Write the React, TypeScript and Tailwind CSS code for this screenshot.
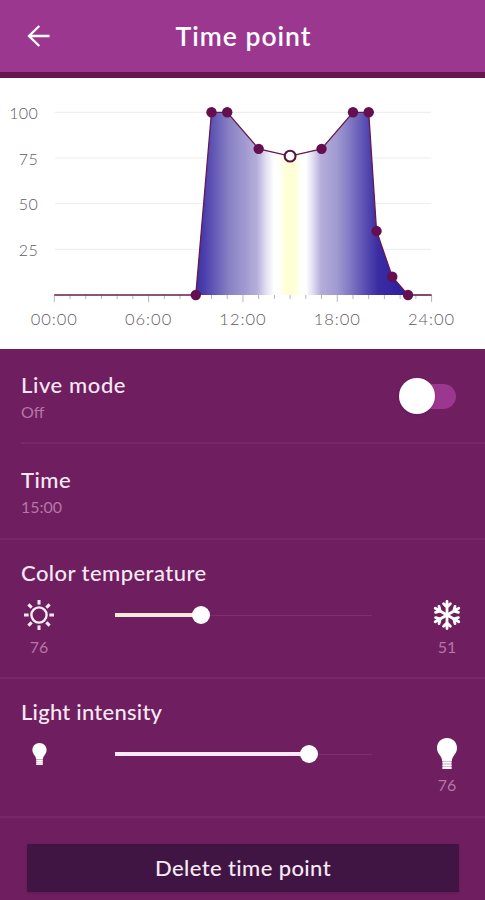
import React, { useState } from 'react';

interface TimePoint {
  hour: number;
  value: number;
}

const POINTS: TimePoint[] = [
  { hour: 9, value: 0 },
  { hour: 10, value: 100 },
  { hour: 11, value: 100 },
  { hour: 13, value: 80 },
  { hour: 15, value: 76 },
  { hour: 17, value: 80 },
  { hour: 19, value: 100 },
  { hour: 20, value: 100 },
  { hour: 20.5, value: 35 },
  { hour: 21.5, value: 10 },
  { hour: 22.5, value: 0 },
];

const SELECTED_HOUR = 15;

// chart coordinates
const toX = (hour: number) => 54.3 + hour * 15.72;
const toY = (value: number) => 217 - value * 1.827;

const STOPS: [number, string][] = [
  [196, '#3f309f'],
  [204, '#4a3fac'],
  [216, '#675eb8'],
  [230, '#8a83c4'],
  [244, '#9f98d0'],
  [257, '#b5aedb'],
  [266, '#e3dff1'],
  [274, '#ffffff'],
  [278, '#ffffff'],
  [286, '#ffffd6'],
  [295, '#ffffd6'],
  [302, '#ffffff'],
  [306, '#ffffff'],
  [313, '#e0dcf0'],
  [321, '#b4addb'],
  [337, '#a09ad0'],
  [352, '#7c74c1'],
  [366, '#564bb0'],
  [378, '#3a2da4'],
  [408, '#2a1c9c'],
];

function ScheduleChart() {
  const line = POINTS.map((p) => `${toX(p.hour)},${toY(p.value)}`).join(' ');
  const baseline = toY(0);

  return (
    <svg viewBox="0 0 485 271" className="block h-[271px] w-full bg-white">
      <defs>
        <linearGradient id="schedule" gradientUnits="userSpaceOnUse" x1="196" y1="0" x2="408" y2="0">
          {STOPS.map(([x, color]) => (
            <stop key={x} offset={(x - 196) / 212} stopColor={color} />
          ))}
        </linearGradient>
      </defs>

      {[100, 75, 50, 25].map((value) => (
        <g key={value}>
          <line x1="55" x2="431" y1={toY(value)} y2={toY(value)} stroke="#ececec" />
          <text
            x="38"
            y={toY(value) + 6.8}
            textAnchor="end"
            className="fill-[#5f5a62] text-[16px] font-light tracking-[0.3px]"
          >
            {value}
          </text>
        </g>
      ))}

      {Array.from({ length: 25 }, (_, hour) => (
        <line
          key={hour}
          x1={toX(hour)}
          x2={toX(hour)}
          y1={baseline}
          y2={baseline + (hour % 6 === 0 ? 7 : 4)}
          stroke="#b9b3bb"
        />
      ))}

      {[0, 6, 12, 18, 24].map((hour) => (
        <text
          key={hour}
          x={toX(hour)}
          y="246.5"
          textAnchor="middle"
          className="fill-[#5f5a62] text-[16.5px] font-light tracking-[1px]"
        >
          {`${String(hour).padStart(2, '0')}:00`}
        </text>
      ))}

      <polygon points={line} fill="url(#schedule)" />
      <line x1={toX(0)} x2={toX(9)} y1={baseline} y2={baseline} stroke="#68194f" strokeWidth="1.6" />
      <line x1={toX(22.5)} x2={toX(24)} y1={baseline} y2={baseline} stroke="#68194f" strokeWidth="1.6" />
      <polyline points={line} fill="none" stroke="#68194f" strokeWidth="1.3" />

      {POINTS.map((p) =>
        p.hour === SELECTED_HOUR ? (
          <circle key={p.hour} cx={toX(p.hour)} cy={toY(p.value)} r="5.4" fill="#fff" stroke="#5a1147" strokeWidth="2.1" />
        ) : (
          <circle key={p.hour} cx={toX(p.hour)} cy={toY(p.value)} r="5.2" fill="#650f50" />
        ),
      )}
    </svg>
  );
}

function SunIcon() {
  return (
    <svg viewBox="0 0 32 32" className="h-8 w-8" fill="none" stroke="#fdeef6" strokeWidth="2.4">
      <circle cx="16" cy="16" r="7.6" />
      {[0, 45, 90, 135, 180, 225, 270, 315].map((angle) => (
        <path key={angle} d="M16 1v4.600" strokeWidth="3" transform={`rotate(${angle} 16 16)`} />
      ))}
    </svg>
  );
}

function SnowIcon() {
  return (
    <svg
      viewBox="0 0 32 32"
      className="h-8 w-8"
      fill="none"
      stroke="#fff"
      strokeWidth="2.8"
      strokeLinecap="round"
      strokeLinejoin="round"
    >
      {[0, 60, 120, 180, 240, 300].map((angle) => (
        <path key={angle} d="M16 16V2.400M12.600 4.800 16 8.200l3.400-3.400" transform={`rotate(${angle} 16 16)`} />
      ))}
    </svg>
  );
}

function BulbIcon({ className }: { className: string }) {
  return (
    <svg viewBox="0 0 20 31" className={className}>
      <path
        fill="#fff"
        d="M10 0C4.300 0 0 4.300 0 9.900c0 3.600 1.700 5.600 3.400 8.200 1.100 1.700 1.700 3 1.700 4.900h9.800c0-1.900.6-3.200 1.700-4.900 1.700-2.600 3.400-4.600 3.400-8.200C20 4.300 15.700 0 10 0Z"
      />
      <path fill="#c7a3c1" d="M5.500 22.900h9V31h-9z" />
      <path fill="#fff" d="M5.500 23.700h9v1.900h-9zM5.500 26.400h9v1.900h-9zM5.500 29h9v2h-9z" />
    </svg>
  );
}

interface SliderProps {
  percent: number;
  color: string;
}

function Slider({ percent, color }: SliderProps) {
  return (
    <div className="flex h-8 w-[257px] items-center">
      <div className="h-[3.500px]" style={{ width: `${percent}%`, backgroundColor: color }} />
      <div className="z-10 -mx-[9px] h-[18px] w-[18px] shrink-0 rounded-full bg-white" />
      <div className="h-px flex-1 bg-[#802e70]" />
    </div>
  );
}

export default function App() {
  const [live, setLive] = useState(false);

  return (
    <div className="flex h-[900px] w-[485px] flex-col overflow-hidden bg-[#6f1e5f] font-['Lato',sans-serif] text-[#f8e9f5]">
      <header className="flex h-[78px] items-center border-b-[6px] border-[#66154f] bg-[#9b378f] pl-[27px]">
        <svg viewBox="0 0 24 22" className="h-[22px] w-6" fill="none" stroke="#fff" strokeWidth="2.300">
          <path d="M12.300 1 2 11l10.300 10M1.500 11H22.500" />
        </svg>
        <h1 className="mr-[49px] flex-1 pt-0.5 text-center text-[26.5px] font-semibold tracking-[1px] text-white">
          Time point
        </h1>
      </header>

      <ScheduleChart />

      <section className="flex h-[95px] pl-[21px]">
        <div className="flex flex-1 justify-between border-b-2 border-[#762868] pr-[29px]">
          <div className="pt-[21px]">
            <h2 className="text-[22px] leading-[30px] font-medium tracking-[0.6px]">Live mode</h2>
            <p className="text-[16px] leading-6 text-[#b576a9]">{live ? 'On' : 'Off'}</p>
          </div>
          <button
            onClick={() => setLive(!live)}
            className={`mt-[29px] flex h-9 w-[57px] items-center ${live ? 'flex-row-reverse' : ''}`}
          >
            <span className="z-10 h-9 w-9 rounded-full bg-white shadow" />
            <span className="-mx-4 h-[25px] w-[37px] rounded-full bg-[#9b378f]" />
          </button>
        </div>
      </section>

      <section className="h-[96px] border-b-2 border-[#762868] pt-[21px] pl-[21px]">
        <h2 className="text-[22px] leading-[30px] font-medium tracking-[0.5px]">Time</h2>
        <p className="text-[16px] leading-6 text-[#b576a9]">15:00</p>
      </section>

      <section className="h-[139px] border-b-2 border-[#762868] pt-[18px] pl-[21px]">
        <h2 className="text-[22px] leading-[30px] font-medium tracking-[0.45px]">Color temperature</h2>
        <div className="mt-[11px] flex items-start">
          <div className="flex w-[36px] flex-col items-center">
            <SunIcon />
            <p className="text-[16px] leading-8 text-[#b576a9]">76</p>
          </div>
          <div className="ml-[58px]">
            <Slider percent={33.5} color="#fbe9dc" />
          </div>
          <div className="ml-[57px] flex w-[36px] flex-col items-center">
            <SnowIcon />
            <p className="text-[16px] leading-8 text-[#b576a9]">51</p>
          </div>
        </div>
      </section>

      <section className="h-[139px] border-b-2 border-[#762868] pt-[18px] pl-[21px]">
        <h2 className="text-[22px] leading-[30px] font-medium tracking-[0.25px]">Light intensity</h2>
        <div className="mt-[11px] flex items-start">
          <div className="flex h-8 w-[36px] items-center justify-center">
            <BulbIcon className="h-[22px] w-[15px]" />
          </div>
          <div className="ml-[58px]">
            <Slider percent={75.5} color="#fbeaf6" />
          </div>
          <div className="ml-[57px] flex w-[36px] flex-col items-center">
            <BulbIcon className="h-[31px] w-5" />
            <p className="text-[16px] leading-8 text-[#b576a9]">76</p>
          </div>
        </div>
      </section>

      <footer className="flex-1 pt-[26px] pr-[26px] pl-[27px]">
        <button className="h-[48px] w-full bg-[#401543] pb-0.5 text-[22px] font-medium tracking-[0.4px] shadow-sm">
          Delete time point
        </button>
      </footer>
    </div>
  );
}
